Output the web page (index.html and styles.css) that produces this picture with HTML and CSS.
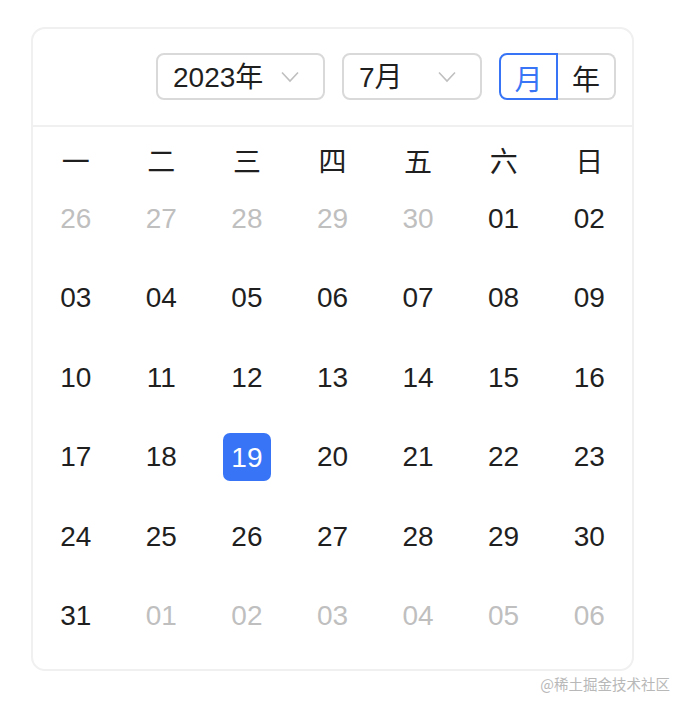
FILE: index.html
```html
<!DOCTYPE html>
<html lang="zh">
<head>
<meta charset="utf-8">
<link rel="stylesheet" href="styles.css">
</head>
<body>
<div class="page">
  <div class="calendar">
    <div class="header">
      <div class="select year">
        <span class="value">2023年</span>
        <svg class="arrow" width="18" height="12" viewBox="0 0 18 12"><path d="M1 1.5 L9 10 L17 1.5" fill="none" stroke="#bfbfbf" stroke-width="1.6"/></svg>
      </div>
      <div class="select month">
        <span class="value">7月</span>
        <svg class="arrow" width="18" height="12" viewBox="0 0 18 12"><path d="M1 1.5 L9 10 L17 1.5" fill="none" stroke="#bfbfbf" stroke-width="1.6"/></svg>
      </div>
      <div class="toggle">
        <span class="opt active">月</span>
        <span class="opt">年</span>
      </div>
    </div>
    <div class="body">
      <div class="grid weekdays">
        <span>一</span><span>二</span><span>三</span><span>四</span><span>五</span><span>六</span><span>日</span>
      </div>
      <div class="grid dates">
        <span class="muted">26</span><span class="muted">27</span><span class="muted">28</span><span class="muted">29</span><span class="muted">30</span><span>01</span><span>02</span>
        <span>03</span><span>04</span><span>05</span><span>06</span><span>07</span><span>08</span><span>09</span>
        <span>10</span><span>11</span><span>12</span><span>13</span><span>14</span><span>15</span><span>16</span>
        <span>17</span><span>18</span><span><b class="sel">19</b></span><span>20</span><span>21</span><span>22</span><span>23</span>
        <span>24</span><span>25</span><span>26</span><span>27</span><span>28</span><span>29</span><span>30</span>
        <span>31</span><span class="muted">01</span><span class="muted">02</span><span class="muted">03</span><span class="muted">04</span><span class="muted">05</span><span class="muted">06</span>
      </div>
    </div>
  </div>
  <div class="watermark">@稀土掘金技术社区</div>
</div>
</body>
</html>
```

FILE: styles.css
```css
html, body {
  margin: 0;
  padding: 0;
  background: #fff;
}
body {
  font-family: "Liberation Sans", "Noto Sans CJK SC", sans-serif;
  color: #1f1f1f;
}
.page {
  position: relative;
  width: 690px;
  height: 712px;
  padding: 27px 0 0 31px;
  box-sizing: border-box;
}
.calendar {
  width: 603px;
  height: 644px;
  box-sizing: border-box;
  border: 2px solid #f0f0f0;
  border-radius: 14px;
  display: flex;
  flex-direction: column;
}
.header {
  display: flex;
  justify-content: flex-end;
  align-items: center;
  gap: 17px;
  padding: 24px 16px 25px 0;
  border-bottom: 2px solid #f0f0f0;
}
.select {
  height: 47px;
  box-sizing: border-box;
  border: 2px solid #d9d9d9;
  border-radius: 8px;
  display: flex;
  align-items: center;
  justify-content: space-between;
  padding: 0 24px 0 15px;
  font-size: 28px;
}
.select.year { width: 169px; }
.select.month { width: 140px; }
.value {
  line-height: 1;
  padding-top: 3px;
}
.arrow { display: block; }
.toggle {
  display: flex;
  height: 47px;
}
.opt {
  height: 47px;
  box-sizing: border-box;
  display: flex;
  align-items: center;
  justify-content: center;
  font-size: 28px;
  padding-top: 2px;
  border: 2px solid #d9d9d9;
}
.opt.active {
  width: 59px;
  border-color: #3875f6;
  color: #3875f6;
  border-radius: 8px 0 0 8px;
  position: relative;
  z-index: 1;
}
.opt:not(.active) {
  width: 58px;
  border-left: none;
  border-radius: 0 8px 8px 0;
}
.body {
  padding: 20px 0 0 0;
}
.grid {
  display: grid;
  grid-template-columns: repeat(7, 1fr);
  text-align: center;
  font-size: 28px;
}
.weekdays span {
  height: 32px;
  line-height: 32px;
}
.dates span {
  height: 79.5px;
  display: flex;
  align-items: center;
  justify-content: center;
}
.dates .muted {
  color: #bfbfbf;
}
.sel {
  font-weight: normal;
  width: 48px;
  height: 48px;
  border-radius: 7px;
  background: #3875f6;
  color: #fff;
  display: flex;
  align-items: center;
  justify-content: center;
  padding-top: 2px;
  box-sizing: border-box;
}
.watermark {
  position: absolute;
  right: 20px;
  top: 674px;
  font-size: 14.5px;
  color: #b8b8b8;
  font-family: "Noto Sans CJK SC", sans-serif;
  line-height: 20px;
}
```
